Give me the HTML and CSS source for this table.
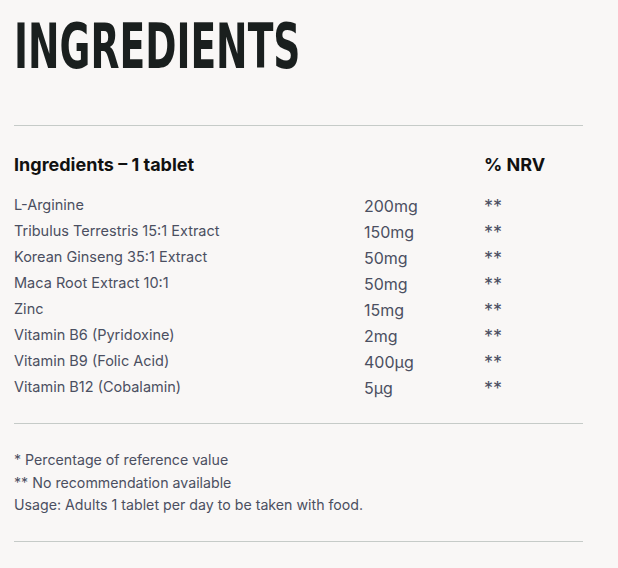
FILE: index.html
```html
<!DOCTYPE html>
<html lang="en">
<head>
<meta charset="utf-8">
<title>Ingredients</title>
<link rel="stylesheet" href="styles.css">
</head>
<body>
<main class="page">
  <h1 class="title">INGREDIENTS</h1>
  <hr class="rule">
  <section class="table">
    <div class="head name-h">Ingredients – 1 tablet</div>
    <div class="head amt-h"></div>
    <div class="head nrv-h">% NRV</div>

    <div class="name">L-Arginine</div><div class="amt">200mg</div><div class="nrv">**</div>
    <div class="name">Tribulus Terrestris 15:1 Extract</div><div class="amt">150mg</div><div class="nrv">**</div>
    <div class="name">Korean Ginseng 35:1 Extract</div><div class="amt">50mg</div><div class="nrv">**</div>
    <div class="name">Maca Root Extract 10:1</div><div class="amt">50mg</div><div class="nrv">**</div>
    <div class="name">Zinc</div><div class="amt">15mg</div><div class="nrv">**</div>
    <div class="name">Vitamin B6 (Pyridoxine)</div><div class="amt">2mg</div><div class="nrv">**</div>
    <div class="name">Vitamin B9 (Folic Acid)</div><div class="amt">400µg</div><div class="nrv">**</div>
    <div class="name">Vitamin B12 (Cobalamin)</div><div class="amt">5µg</div><div class="nrv">**</div>
  </section>
  <hr class="rule">
  <section class="notes">
    <p>* Percentage of reference value</p>
    <p>** No recommendation available</p>
    <p>Usage: Adults 1 tablet per day to be taken with food.</p>
  </section>
  <hr class="rule">
</main>
</body>
</html>
```

FILE: styles.css
```css
html, body {
  margin: 0;
  padding: 0;
  background: #f9f7f6;
}
.page {
  width: 569px;
  padding: 0 0 0 14px;
  font-family: Inter, "Liberation Sans", sans-serif;
  color: #4b4f61;
}
.title {
  margin: 0;
  padding-top: 14px;
  height: 70px;
  font-family: "Liberation Sans Narrow", "DejaVu Sans Condensed", sans-serif;
  font-stretch: condensed;
  font-weight: 700;
  font-size: 62px;
  line-height: 66px;
  color: #1a1f1e;
  transform: scaleX(0.675);
  transform-origin: left center;
  white-space: nowrap;
}
.rule {
  margin: 0;
  border: 0;
  border-top: 1px solid #c6cbc8;
  height: 0;
}
.page > .rule:first-of-type {
  margin-top: 41px;
}
.table {
  display: grid;
  grid-template-columns: 350px 120px 1fr;
  padding-top: 28px;
  padding-bottom: 23px;
}
.head {
  font-weight: 700;
  font-size: 18px;
  color: #111;
  line-height: 22px;
  padding-bottom: 16px;
}
.name {
  font-size: 14.5px;
  line-height: 26px;
}
.amt {
  font-size: 16px;
  line-height: 24px;
  padding-top: 2px;
}
.nrv {
  font-size: 18px;
  line-height: 23px;
  height: 26px;
  padding-top: 3px;
  box-sizing: border-box;
}
.notes {
  padding: 25px 0 24px;
  font-size: 14.2px;
  line-height: 22.5px;
}
.notes p {
  margin: 0;
}
```
